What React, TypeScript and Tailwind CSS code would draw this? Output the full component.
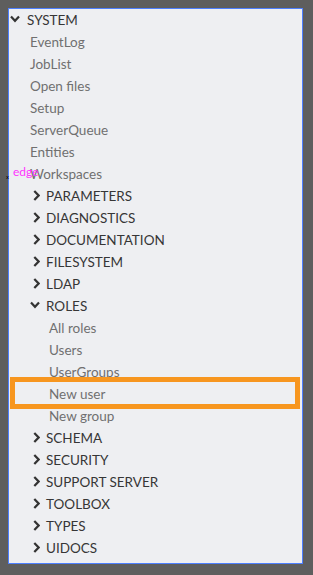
import React from 'react'

type Node = {
  label: string
  level: 0 | 1 | 2 | 3
  kind: 'open' | 'closed' | 'leaf'
  highlight?: boolean
  edge?: boolean
}

const rows: Node[] = [
  { label: 'SYSTEM', level: 0, kind: 'open' },
  { label: 'EventLog', level: 1, kind: 'leaf' },
  { label: 'JobList', level: 1, kind: 'leaf' },
  { label: 'Open files', level: 1, kind: 'leaf' },
  { label: 'Setup', level: 1, kind: 'leaf' },
  { label: 'ServerQueue', level: 1, kind: 'leaf' },
  { label: 'Entities', level: 1, kind: 'leaf' },
  { label: 'Workspaces', level: 1, kind: 'leaf', edge: true },
  { label: 'PARAMETERS', level: 2, kind: 'closed' },
  { label: 'DIAGNOSTICS', level: 2, kind: 'closed' },
  { label: 'DOCUMENTATION', level: 2, kind: 'closed' },
  { label: 'FILESYSTEM', level: 2, kind: 'closed' },
  { label: 'LDAP', level: 2, kind: 'closed' },
  { label: 'ROLES', level: 2, kind: 'open' },
  { label: 'All roles', level: 3, kind: 'leaf' },
  { label: 'Users', level: 3, kind: 'leaf' },
  { label: 'UserGroups', level: 3, kind: 'leaf' },
  { label: 'New user', level: 3, kind: 'leaf', highlight: true },
  { label: 'New group', level: 3, kind: 'leaf' },
  { label: 'SCHEMA', level: 2, kind: 'closed' },
  { label: 'SECURITY', level: 2, kind: 'closed' },
  { label: 'SUPPORT SERVER', level: 2, kind: 'closed' },
  { label: 'TOOLBOX', level: 2, kind: 'closed' },
  { label: 'TYPES', level: 2, kind: 'closed' },
  { label: 'UIDOCS', level: 2, kind: 'closed' },
]

function ChevronDown() {
  return (
    <svg width="10" height="8" viewBox="0 0 10 8" className="shrink-0">
      <path d="M1 1.5 L5 5.8 L9 1.5" fill="none" stroke="#333" strokeWidth="2.2" />
    </svg>
  )
}

function ChevronRight() {
  return (
    <svg width="7" height="11" viewBox="0 0 7 11" className="shrink-0">
      <path d="M1.3 1 L5.6 5.5 L1.3 10" fill="none" stroke="#333" strokeWidth="2.2" />
    </svg>
  )
}

function Row({ node }: { node: Node }) {
  return (
    <div className="relative flex h-[22px] items-center text-[13.5px]">
      {node.level === 0 && (
        <div className="flex items-center">
          <span className="ml-[1px] mt-[-3px] flex">
            <ChevronDown />
          </span>
          <span className="ml-[7px] text-[#363636]">{node.label}</span>
        </div>
      )}
      {node.level === 1 && (
        <span className="pl-[21px] text-[#707070]">{node.label}</span>
      )}
      {node.level === 2 && (
        <div className="flex items-center">
          {node.kind === 'open' ? (
            <span className="ml-[21px] mr-[6px] mt-[-3px] flex">
              <ChevronDown />
            </span>
          ) : (
            <span className="ml-[24px] mr-[6px] mt-[-2px] flex">
              <ChevronRight />
            </span>
          )}
          <span className="text-[#363636]">{node.label}</span>
        </div>
      )}
      {node.level === 3 && (
        <span className="pl-[40px] text-[#707070]">{node.label}</span>
      )}
      {node.edge && (
        <>
          <span className="absolute left-[4px] top-[3px] text-[12px] leading-none text-[#ff33ff]">edge</span>
          <span className="absolute left-[-3px] top-[11px] text-[6px] leading-none text-black">x</span>
        </>
      )}
      {node.highlight && (
        <div className="pointer-events-none absolute left-[1px] right-[2px] top-[-6px] bottom-[-4px] border-[5px] border-[#f7961f]" />
      )}
    </div>
  )
}

export default function App() {
  return (
    <div
      className="h-[575px] w-[313px] bg-[#5e5e5e] pl-[8px] pt-[8px]"
      style={{ fontFamily: 'Lato, "Open Sans", sans-serif' }}
    >
      <div className="flex h-[556px] w-[295px] flex-col border border-[#4d7fff] bg-[#eeeff2]">
        {rows.map((r) => (
          <Row key={r.label} node={r} />
        ))}
      </div>
    </div>
  )
}
